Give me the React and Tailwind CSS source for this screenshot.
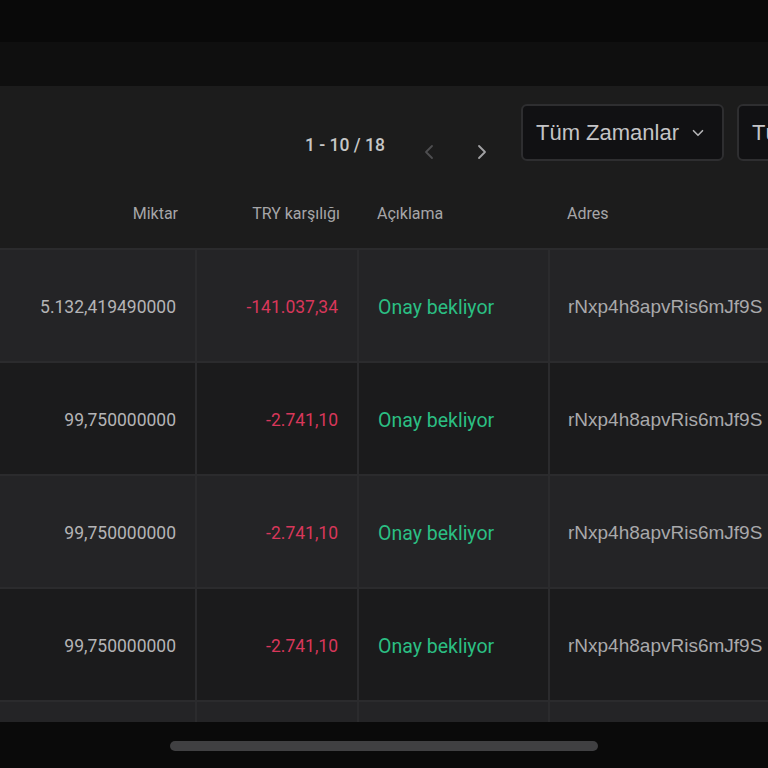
import React from 'react';
import { ChevronDown, ChevronLeft, ChevronRight } from 'lucide-react';

const rows = [
  { amount: '5.132,419490000', tr: '-141.037,34' },
  { amount: '99,750000000', tr: '-2.741,10' },
  { amount: '99,750000000', tr: '-2.741,10' },
  { amount: '99,750000000', tr: '-2.741,10' },
];

const address = 'rNxp4h8apvRis6mJf9S';

const Row = ({ row, index }) => {
  const bg = index % 2 === 0 ? 'bg-[#242426]' : 'bg-[#1b1b1c]';
  return (
    <div className={`flex h-[113px] pt-[4px] border-t-2 border-[#2b2b2d] ${bg}`}>
      <div className="w-[195px] shrink-0 flex items-center justify-end pr-[19px] text-[17.5px] text-[#b4b4b6]" style={{ fontFamily: 'Roboto, sans-serif' }}>
        {row.amount}
      </div>
      <div className="w-[162px] shrink-0 -mt-[4px] pt-[4px] border-l-2 border-[#2b2b2d] flex items-center justify-end pr-[19px] text-[17.5px] text-[#d8375a]" style={{ fontFamily: 'Roboto, sans-serif' }}>
        {row.tr}
      </div>
      <div className="w-[191px] shrink-0 -mt-[4px] pt-[4px] border-l-2 border-[#2b2b2d] flex items-center pl-[19px] text-[19.5px] text-[#2bbf83]" style={{ fontFamily: 'Roboto, sans-serif' }}>
        Onay bekliyor
      </div>
      <div className="flex-1 min-w-0 -mt-[4px] pt-[4px] overflow-hidden border-l-2 border-[#2b2b2d] flex items-center pl-[18px] text-[19px] text-[#a9a9ab] whitespace-nowrap" style={{ fontFamily: '"Liberation Sans", Arial, sans-serif' }}>
        {address}
      </div>
    </div>
  );
};

export default function App() {
  return (
    <div className="w-[768px] h-[768px] overflow-hidden flex flex-col bg-[#1c1c1c]">
      <div className="h-[42px] shrink-0 bg-[#090909]" />
      <div className="h-[44px] shrink-0 bg-[#0f0f0f]" />

      <div className="h-[162px] shrink-0 bg-[#1c1c1c] flex flex-col">
        <div className="flex items-start pt-[18px] h-[100px] overflow-hidden">
          <div className="flex items-start ml-[305px] mt-[28px] shrink-0 whitespace-nowrap">
            <span className="w-[80px] text-[17.5px] font-medium text-[#c6c6c6]" style={{ fontFamily: 'Roboto, sans-serif' }}>1 - 10 / 18</span>
            <ChevronLeft className="ml-[32px] mt-[8px] text-[#4e4e50] shrink-0" size={24} strokeWidth={1.8} />
            <ChevronRight className="ml-[29px] mt-[8px] text-[#a2a2a4] shrink-0" size={24} strokeWidth={1.8} />
          </div>
          <div className="ml-[27px] w-[203px] h-[57px] shrink-0 rounded-md border-2 border-[#2e2e30] bg-[#111113] flex items-center pl-[13px] pr-[15px] justify-between">
            <span className="text-[22px] text-[#c4c4c6] whitespace-nowrap" style={{ fontFamily: '"Liberation Sans", Arial, sans-serif' }}>Tüm Zamanlar</span>
            <ChevronDown className="text-[#b4b4b6] shrink-0" size={18} strokeWidth={2.2} />
          </div>
          <div className="ml-[13px] w-[150px] h-[57px] shrink-0 rounded-md border-2 border-[#2e2e30] bg-[#111113] flex items-center pl-[13px]">
            <span className="text-[22px] text-[#c4c4c6] whitespace-nowrap" style={{ fontFamily: '"Liberation Sans", Arial, sans-serif' }}>Tüm</span>
          </div>
        </div>
        <div className="flex items-center h-[62px] pb-[6px] text-[16px] text-[#a6a6a8]" style={{ fontFamily: 'Roboto, sans-serif' }}>
          <div className="w-[195px] text-right pr-[17px]">Miktar</div>
          <div className="w-[162px] text-right pr-[17px]">TRY karşılığı</div>
          <div className="w-[191px] pl-[20px]">Açıklama</div>
          <div className="pl-[19px]">Adres</div>
        </div>
      </div>

      {rows.map((row, i) => (
        <Row key={i} row={row} index={i} />
      ))}

      <div className="h-[22px] shrink-0 flex border-t-2 border-[#2b2b2d] bg-[#242426]">
        <div className="w-[195px] shrink-0" />
        <div className="w-[162px] shrink-0 border-l-2 border-[#2b2b2d]" />
        <div className="w-[191px] shrink-0 border-l-2 border-[#2b2b2d]" />
        <div className="flex-1 border-l-2 border-[#2b2b2d]" />
      </div>

      <div className="flex-1 bg-[#0a0a0a] flex justify-center pt-[19px]">
        <div className="w-[428px] h-[10px] rounded-full bg-[#404042]" />
      </div>
    </div>
  );
}
